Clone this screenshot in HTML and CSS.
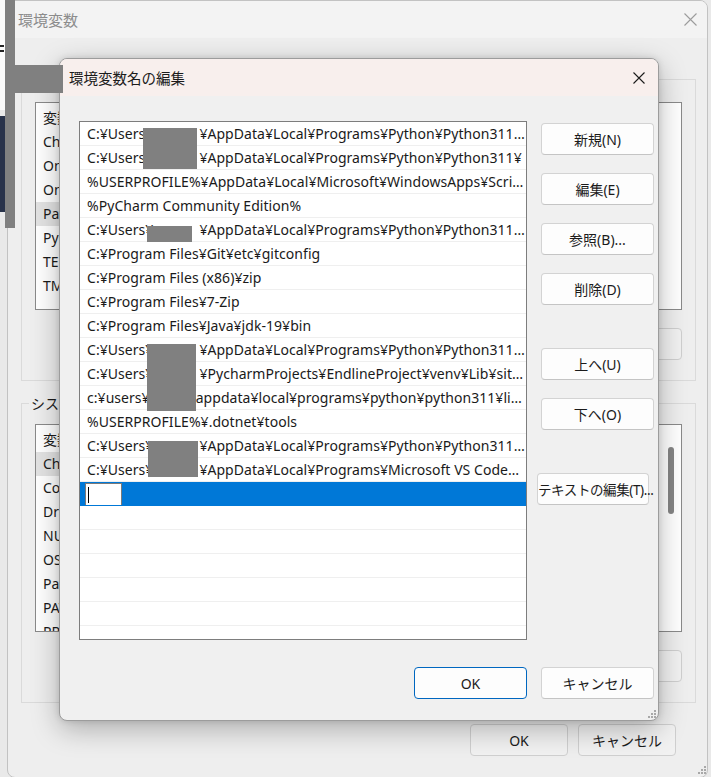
FILE: index.html
```html
<!DOCTYPE html>
<html lang="ja">
<head>
<meta charset="utf-8">
<title>環境変数名の編集</title>
<link rel="stylesheet" href="styles.css">
</head>
<body>
<div class="desktop">
  <div class="desk-white"></div>
  <div class="desk-dark"></div>
  <div class="desk-mark"></div>

  <section class="window">
    <header class="win-title">
      <span class="win-title-text">環境変数</span>
      <svg class="win-close" width="13" height="13" viewBox="0 0 13 13"><path d="M0.5 0.5 L12.5 12.5 M12.5 0.5 L0.5 12.5" stroke="#9c9c9c" stroke-width="1.1" fill="none"/></svg>
    </header>
    <div class="win-body">
      <div class="group group-user">
        <div class="group-label">ユーザー環境変数(U)</div>
        <div class="varlist">
          <div class="vrow">変数</div>
          <div class="vrow">ChocolateyLastPathUpdate</div>
          <div class="vrow">OneDrive</div>
          <div class="vrow">OneDriveConsumer</div>
          <div class="vrow sel">Path</div>
          <div class="vrow">PyCharm Community Edition</div>
          <div class="vrow">TEMP</div>
          <div class="vrow">TMP</div>
        </div>
        <div class="group-buttons">
          <button class="wbtn">新規(N)...</button>
          <button class="wbtn">編集(E)...</button>
          <button class="wbtn">削除(D)</button>
        </div>
      </div>
      <div class="group group-sys">
        <div class="group-label">システム環境変数</div>
        <div class="varlist">
          <div class="vrow">変数</div>
          <div class="vrow sel">ChocolateyInstall</div>
          <div class="vrow">ComSpec</div>
          <div class="vrow">DriverData</div>
          <div class="vrow">NUMBER_OF_PROCESSORS</div>
          <div class="vrow">OS</div>
          <div class="vrow">Path</div>
          <div class="vrow">PATHEXT</div>
          <div class="vrow">PROCESSOR_ARCHITECTURE</div>
          <div class="thumb"></div>
        </div>
        <div class="group-buttons">
          <button class="wbtn">新規(W)...</button>
          <button class="wbtn">編集(I)...</button>
          <button class="wbtn">削除(L)</button>
        </div>
      </div>
      <div class="win-footer">
        <button class="wbtn">OK</button>
        <button class="wbtn">キャンセル</button>
      </div>
    </div>
    <svg class="grip grip-win" width="9" height="9" viewBox="0 0 9 9"><g fill="#a8a8a8"><rect x="7" y="1" width="2" height="2"/><rect x="4" y="4" width="2" height="2"/><rect x="7" y="4" width="2" height="2"/><rect x="1" y="7" width="2" height="2"/><rect x="4" y="7" width="2" height="2"/><rect x="7" y="7" width="2" height="2"/></g></svg>
  </section>

  <section class="dialog">
    <header class="dlg-title">
      <span class="dlg-title-text">環境変数名の編集</span>
      <svg class="dlg-close" width="12" height="12" viewBox="0 0 12 12"><path d="M0.5 0.5 L11.5 11.5 M11.5 0.5 L0.5 11.5" stroke="#1b1b1b" stroke-width="1.1" fill="none"/></svg>
    </header>
    <div class="dlg-body">
      <div class="pathlist">
        <div class="prow">C:¥Users¥<span class="user">user</span>¥AppData¥Local¥Programs¥Python¥Python311¥Scripts¥</div>
        <div class="prow">C:¥Users¥<span class="user">user</span>¥AppData¥Local¥Programs¥Python¥Python311¥</div>
        <div class="prow">%USERPROFILE%¥AppData¥Local¥Microsoft¥WindowsApps¥Scripts</div>
        <div class="prow">%PyCharm Community Edition%</div>
        <div class="prow">C:¥Users¥<span class="user">user</span>¥AppData¥Local¥Programs¥Python¥Python311¥Scripts¥</div>
        <div class="prow">C:¥Program Files¥Git¥etc¥gitconfig</div>
        <div class="prow">C:¥Program Files (x86)¥zip</div>
        <div class="prow">C:¥Program Files¥7-Zip</div>
        <div class="prow">C:¥Program Files¥Java¥jdk-19¥bin</div>
        <div class="prow">C:¥Users¥<span class="user">user</span>¥AppData¥Local¥Programs¥Python¥Python311¥Scripts</div>
        <div class="prow">C:¥Users¥<span class="user">user</span>¥PycharmProjects¥EndlineProject¥venv¥Lib¥site-packages</div>
        <div class="prow">c:¥users¥<span class="user">user</span>appdata¥local¥programs¥python¥python311¥lib¥site-packages</div>
        <div class="prow">%USERPROFILE%¥.dotnet¥tools</div>
        <div class="prow">C:¥Users¥<span class="user">user</span>¥AppData¥Local¥Programs¥Python¥Python311¥Scripts¥</div>
        <div class="prow">C:¥Users¥<span class="user">user</span>¥AppData¥Local¥Programs¥Microsoft VS Code¥bin</div>
        <div class="prow editing"><span class="edit"><span class="caret"></span></span></div>
        <div class="prow"></div>
        <div class="prow"></div>
        <div class="prow"></div>
        <div class="prow"></div>
        <div class="prow"></div>
        <div class="prow"></div>
        <div class="redact r-a"></div>
        <div class="redact r-b"></div>
        <div class="redact r-c"></div>
        <div class="redact r-d"></div>
      </div>
      <div class="btn-col">
        <button class="dbtn">新規(N)</button>
        <button class="dbtn">編集(E)</button>
        <button class="dbtn">参照(B)...</button>
        <button class="dbtn">削除(D)</button>
        <button class="dbtn far">上へ(U)</button>
        <button class="dbtn">下へ(O)</button>
        <button class="dbtn far textedit">テキストの編集(T)...</button>
      </div>
    </div>
    <div class="dlg-footer">
      <button class="dbtn primary">OK</button>
      <button class="dbtn">キャンセル</button>
    </div>
    <svg class="grip grip-dlg" width="9" height="9" viewBox="0 0 9 9"><g fill="#a8a8a8"><rect x="7" y="1" width="2" height="2"/><rect x="4" y="4" width="2" height="2"/><rect x="7" y="4" width="2" height="2"/><rect x="1" y="7" width="2" height="2"/><rect x="4" y="7" width="2" height="2"/><rect x="7" y="7" width="2" height="2"/></g></svg>
  </section>

  <div class="redact bar-v"></div>
  <div class="redact bar-h"></div>
</div>
</body>
</html>
```

FILE: styles.css
```css
* { box-sizing: border-box; }

html, body {
  margin: 0;
  padding: 0;
}

body {
  width: 711px;
  height: 777px;
  overflow: hidden;
  background: #e9e9e9;
  font-family: "Noto Sans", "Noto Sans CJK JP", sans-serif;
  font-size: 14px;
  color: #1b1b1b;
}

button {
  font-family: "Noto Sans", "Noto Sans CJK JP", sans-serif;
  font-size: 14px;
  color: #1b1b1b;
  padding: 0;
  white-space: nowrap;
}

.desktop {
  position: relative;
  width: 711px;
  height: 777px;
  overflow: hidden;
}

.desk-white {
  position: absolute;
  left: 0;
  top: 0;
  width: 7px;
  height: 110px;
  background: #fbfbfb;
}

.desk-dark {
  position: absolute;
  left: 0;
  top: 116px;
  width: 5px;
  height: 96px;
  background: #28324a;
}

.desk-mark {
  position: absolute;
  left: 0;
  top: 45px;
  width: 4px;
  height: 7px;
  border-top: 2px solid #222;
  border-bottom: 2px solid #222;
}

/* ---------- background window ---------- */
.window {
  position: absolute;
  left: 7px;
  top: 0;
  width: 701px;
  height: 778px;
  background: #eeeeee;
  border: 1px solid #c2c2c2;
  border-radius: 8px;
}

.win-title {
  height: 37px;
  display: flex;
  align-items: center;
  justify-content: space-between;
  padding: 0 10px 0 10px;
  background: #f3f3f3;
  border-radius: 7px 7px 0 0;
}

.win-title-text {
  font-family: "Noto Sans CJK JP", sans-serif;
  font-size: 15px;
  color: #8c8c8c;
}

.win-body {
  padding: 0 11px 0 13px;
}

.group {
  border: 1px solid #dadada;
  padding: 0 13px 20px;
}

.group-user { margin-top: 41px; }
.group-sys { margin-top: 22px; }

.group-label {
  width: fit-content;
  margin: -11px 0 0 -6px;
  padding: 0 2px;
  line-height: 20px;
  background: #eeeeee;
  font-family: "Noto Sans CJK JP", sans-serif;
  font-size: 14px;
}

.varlist {
  position: relative;
  height: 208px;
  border: 1px solid #8a8a8a;
  background: #ffffff;
  padding-top: 3px;
  overflow: hidden;
}

.group-user .varlist { margin-top: 13px; }
.group-sys .varlist { margin-top: 11px; }

.vrow {
  height: 24px;
  line-height: 24px;
  padding-left: 7px;
  white-space: nowrap;
}

.vrow.sel {
  width: 280px;
  background: #e3e3e3;
}

.thumb {
  position: absolute;
  right: 7px;
  top: 22px;
  width: 6px;
  height: 67px;
  background: #858585;
  border-radius: 3px;
}

.group-buttons {
  display: flex;
  justify-content: flex-end;
  gap: 10px;
  margin-top: 18px;
}

.wbtn {
  width: 98px;
  height: 32px;
  background: #f1f1f1;
  border: 1px solid #cfcfcf;
  border-radius: 4px;
}

.win-footer {
  display: flex;
  justify-content: flex-end;
  gap: 10px;
  margin-top: 21px;
  padding-right: 20px;
}

.grip {
  position: absolute;
}

.grip-win {
  right: 1px;
  bottom: 3px;
}

/* ---------- dialog ---------- */
.dialog {
  position: absolute;
  left: 59px;
  top: 58px;
  width: 600px;
  height: 663px;
  background: #f0f0f0;
  border: 1px solid #9c9c9c;
  border-radius: 8px;
  box-shadow: 0 8px 28px rgba(0, 0, 0, 0.28), 0 0 6px rgba(0, 0, 0, 0.12);
}

.dlg-title {
  height: 37px;
  display: flex;
  align-items: center;
  justify-content: space-between;
  padding: 0 13px 0 9px;
  background: #f8efed;
  border-radius: 7px 7px 0 0;
}

.dlg-title-text {
  font-family: "Noto Sans CJK JP", sans-serif;
  font-size: 14.5px;
  color: #1b1b1b;
}

.dlg-body {
  display: flex;
  gap: 14px;
  padding: 25px 4px 0 19px;
}

.pathlist {
  position: relative;
  width: 448px;
  height: 519px;
  border: 1px solid #7d7d7d;
  background: #ffffff;
  overflow: hidden;
}

.prow {
  height: 24px;
  line-height: 24px;
  border-bottom: 1px solid #efefef;
  padding: 0 1px 0 7px;
  white-space: nowrap;
  overflow: hidden;
  text-overflow: ellipsis;
  color: #1a1a1a;
  letter-spacing: 0.05px;
}

.user {
  display: inline-block;
  width: 46px;
  overflow: hidden;
  vertical-align: top;
}

.prow.editing {
  background: #0078d7;
  border-bottom-color: #0078d7;
  padding-left: 5px;
}

.edit {
  display: inline-block;
  width: 37px;
  height: 24px;
  margin-top: 1px;
  background: #ffffff;
  border: 1px solid #7a7a7a;
  vertical-align: top;
  padding: 3px 0 0 2px;
}

.caret {
  display: block;
  width: 1px;
  height: 16px;
  background: #000000;
}

.redact {
  position: absolute;
  background: #808080;
}

.r-a { left: 63px; top: 6px; width: 54px; height: 41px; }
.r-b { left: 67px; top: 104px; width: 45px; height: 16px; }
.r-c { left: 67px; top: 222px; width: 49px; height: 67px; }
.r-d { left: 68px; top: 319px; width: 50px; height: 36px; }

.btn-col {
  width: 113px;
  display: flex;
  flex-direction: column;
  gap: 18px;
  padding-top: 2px;
}

.dbtn {
  width: 113px;
  height: 32px;
  background: #fdfdfd;
  border: 1px solid #d3d3d3;
  border-bottom-color: #c4c4c4;
  border-radius: 4px;
}

.dbtn.far { margin-top: 25px; }

.dbtn.textedit {
  width: 112px;
  margin-left: -4px;
  font-size: 13.5px;
  letter-spacing: -0.4px;
}

.dlg-footer {
  display: flex;
  justify-content: flex-end;
  gap: 14px;
  margin-top: 27px;
  padding-right: 4px;
}

.dbtn.primary {
  border: 1px solid #0067c0;
}

.grip-dlg {
  right: 2px;
  bottom: 2px;
}

.bar-v {
  left: 5px;
  top: 0;
  width: 10px;
  height: 228px;
}

.bar-h {
  left: 15px;
  top: 65px;
  width: 48px;
  height: 28px;
}
```
